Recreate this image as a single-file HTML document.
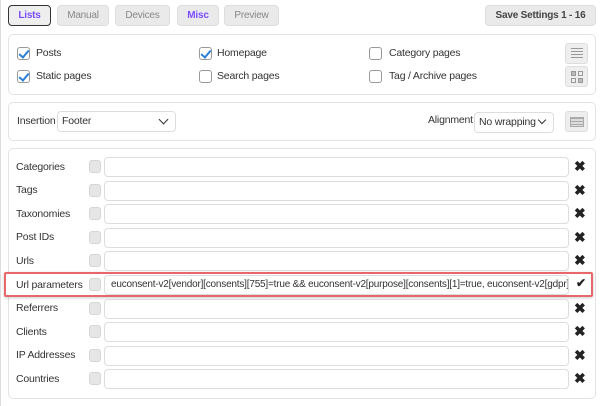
<!DOCTYPE html>
<html><head><style>
*{box-sizing:border-box;margin:0;padding:0}
body{width:600px;height:406px;background:#fff;font-family:"Liberation Sans",sans-serif;font-size:10px;letter-spacing:-0.2px;color:#333;position:relative;overflow:hidden;border-left:1px solid #ddd}
.a{position:absolute}
.tab{position:absolute;top:5px;height:21px;border:1px solid #ddd;border-radius:4px;background:#eaeaea;color:#888;font-size:10px;text-align:center;line-height:19px}
.panel{position:absolute;left:7px;width:588px;border:1px solid #e3e3e3;border-radius:5px;background:#fff}
.cb{position:absolute;width:13px;height:13px;border:1px solid #999;border-radius:3px;background:#fff}
.cb.on::after{content:"";position:absolute;left:3px;top:0px;width:4px;height:8px;border:solid #2a7fd4;border-width:0 2px 2px 0;transform:rotate(40deg)}
.lbl{position:absolute;font-size:10.5px;color:#333}
.ib{position:absolute;width:23px;height:21px;border:1px solid #ddd;border-radius:3px;background:#eee}
.sel{position:absolute;height:21px;border:1px solid #ddd;border-radius:4px;background:#fff;font-size:10.5px;line-height:19px;padding-left:4px}
.inp{position:absolute;left:103px;width:465px;height:20px;border:1px solid #ddd;border-radius:4px;background:#fff}
.sc{position:absolute;left:88px;width:12px;height:13px;border-radius:3px;background:#e6e6e6;border:1px solid #d6d6d6}
.x{position:absolute;left:573px;font-size:14px;font-weight:bold;color:#222;letter-spacing:0}
</style></head><body>
<div class="tab" style="left:7px;width:43px;border:1px solid #333;background:#eee;color:#7a4dff;font-weight:bold">Lists</div>
<div class="tab" style="left:56px;width:52px">Manual</div>
<div class="tab" style="left:114px;width:55px">Devices</div>
<div class="tab" style="left:176px;width:42px;color:#7a4dff;font-weight:bold">Misc</div>
<div class="tab" style="left:223px;width:55px">Preview</div>
<div class="tab" style="left:484px;width:111px;color:#444;font-weight:bold">Save Settings 1 - 16</div>

<div class="panel" style="top:34px;height:61px"></div>
<div class="cb on" style="left:16px;top:47px"></div><div class="lbl" style="left:35px;top:47px">Posts</div>
<div class="cb on" style="left:198px;top:47px"></div><div class="lbl" style="left:216px;top:47px">Homepage</div>
<div class="cb" style="left:368px;top:47px"></div><div class="lbl" style="left:388px;top:47px">Category pages</div>
<div class="cb on" style="left:16px;top:70px"></div><div class="lbl" style="left:35px;top:70px">Static pages</div>
<div class="cb" style="left:198px;top:70px"></div><div class="lbl" style="left:216px;top:70px">Search pages</div>
<div class="cb" style="left:368px;top:70px"></div><div class="lbl" style="left:388px;top:70px">Tag / Archive pages</div>
<div class="ib" style="left:564px;top:43px"><div class="a" style="left:5px;top:4px;width:12px;height:11px;background:repeating-linear-gradient(#999 0 1px,transparent 1px 3px)"></div></div>
<div class="ib" style="left:564px;top:66px"><div class="a" style="left:5px;top:4px;width:5px;height:5px;border:1px solid #999;background:#bbb"></div><div class="a" style="left:12px;top:4px;width:5px;height:5px;border:1px solid #999"></div><div class="a" style="left:5px;top:11px;width:5px;height:5px;border:1px solid #999"></div><div class="a" style="left:12px;top:11px;width:5px;height:5px;border:1px solid #999;background:#bbb"></div></div>

<div class="panel" style="top:102px;height:39px"></div>
<div class="lbl" style="left:16px;top:115px">Insertion</div>
<div class="sel" style="left:56px;top:111px;width:119px">Footer<span class="a" style="right:8px;top:4px;width:7px;height:7px;border:solid #333;border-width:0 1.5px 1.5px 0;transform:rotate(45deg)"></span></div>
<div class="lbl" style="left:427px;top:114px">Alignment</div>
<div class="sel" style="left:473px;top:112px;width:80px">No wrapping<span class="a" style="right:8px;top:4px;width:6px;height:6px;border:solid #333;border-width:0 1.5px 1.5px 0;transform:rotate(45deg)"></span></div>
<div class="ib" style="left:564px;top:111px"><div class="a" style="left:4px;top:5px;width:14px;height:10px;border:1px solid #aaa;background:repeating-linear-gradient(#aaa 0 1px,#ddd 1px 3px)"></div></div>

<div class="panel" style="top:148px;height:251px"></div>

<div class="lbl" style="left:15px;top:161px">Categories</div><div class="sc" style="top:160px"></div><div class="inp" style="top:157px"></div><div class="x" style="top:158px">✖</div>
<div class="lbl" style="left:15px;top:184px">Tags</div><div class="sc" style="top:184px"></div><div class="inp" style="top:181px"></div><div class="x" style="top:182px">✖</div>
<div class="lbl" style="left:15px;top:208px">Taxonomies</div><div class="sc" style="top:207px"></div><div class="inp" style="top:204px"></div><div class="x" style="top:205px">✖</div>
<div class="lbl" style="left:15px;top:231px">Post IDs</div><div class="sc" style="top:231px"></div><div class="inp" style="top:228px"></div><div class="x" style="top:229px">✖</div>
<div class="lbl" style="left:15px;top:255px">Urls</div><div class="sc" style="top:254px"></div><div class="inp" style="top:251px"></div><div class="x" style="top:252px">✖</div>
<div class="a" style="left:3px;top:272px;width:589px;height:25px;border:2px solid #e8676a;border-radius:2px;background:#fff;box-shadow:0 1px 3px rgba(0,0,0,.2)"></div>
<div class="lbl" style="left:15px;top:279px">Url parameters</div><div class="sc" style="top:278px"></div><div class="inp" style="top:275px;overflow:hidden;white-space:nowrap;padding:0 6px;line-height:18px;font-size:10px;letter-spacing:-0.2px;color:#333">euconsent-v2[vendor][consents][755]=true &amp;&amp; euconsent-v2[purpose][consents][1]=true, euconsent-v2[gdpr]</div><div class="x" style="top:276px;left:575px;font-size:12px">✔</div>
<div class="lbl" style="left:15px;top:302px">Referrers</div><div class="sc" style="top:302px"></div><div class="inp" style="top:299px"></div><div class="x" style="top:300px">✖</div>
<div class="lbl" style="left:15px;top:326px">Clients</div><div class="sc" style="top:325px"></div><div class="inp" style="top:322px"></div><div class="x" style="top:323px">✖</div>
<div class="lbl" style="left:15px;top:349px">IP Addresses</div><div class="sc" style="top:349px"></div><div class="inp" style="top:346px"></div><div class="x" style="top:347px">✖</div>
<div class="lbl" style="left:15px;top:373px">Countries</div><div class="sc" style="top:372px"></div><div class="inp" style="top:369px"></div><div class="x" style="top:370px">✖</div>
</body></html>
